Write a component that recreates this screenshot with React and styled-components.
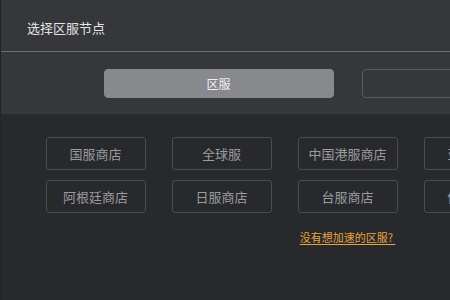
import React from "react";
import styled, { createGlobalStyle } from "styled-components";

const Global = createGlobalStyle`
  html, body {
    margin: 0;
    padding: 0;
    background: #28292d;
    overflow: hidden;
  }
  * { box-sizing: border-box; }
`;

const Dialog = styled.div`
  width: 694px;
  height: 300px;
  display: flex;
  flex-direction: column;
  font-family: "Noto Sans CJK SC", "Noto Sans", sans-serif;
  background: #28292d;
  border-left: 1px solid #232428;
`;

const Header = styled.div`
  height: 52px;
  flex: none;
  display: flex;
  align-items: center;
  padding-left: 26px;
  padding-top: 4px;
  background: #36373b;
  border-bottom: 1px solid #6f7074;
`;

const Title = styled.div`
  color: #e4e4e6;
  font-size: 13px;
  line-height: 1;
`;

const TabBar = styled.div`
  height: 63px;
  flex: none;
  display: flex;
  justify-content: center;
  align-items: center;
  gap: 28px;
  padding-top: 1px;
  background: #36373b;
  border-bottom: 1px solid #2c2d31;
`;

const Tab = styled.div`
  width: 230px;
  height: 29px;
  border-radius: 4px;
  display: flex;
  align-items: center;
  justify-content: center;
  font-size: 12px;
  color: #f2f2f2;
  background: ${(p) => (p.$active ? "#88898d" : "transparent")};
  border: 1px solid ${(p) => (p.$active ? "#88898d" : "#5a5b60")};
`;

const Content = styled.div`
  flex: 1;
  display: flex;
  flex-direction: column;
  align-items: center;
  padding-top: 22px;
  background: #28292d;
`;

const Grid = styled.div`
  display: grid;
  grid-template-columns: repeat(5, 100px);
  column-gap: 26px;
  row-gap: 10px;
`;

const Server = styled.div`
  height: 33px;
  border: 1px solid #4b4c51;
  border-radius: 3px;
  display: flex;
  align-items: center;
  justify-content: center;
  font-size: 13px;
  color: #9a9b9f;
`;

const Link = styled.a`
  margin-top: 16px;
  font-size: 11px;
  color: #e9a33a;
  text-decoration: underline;
  text-underline-offset: 2px;
  white-space: pre;
  cursor: pointer;
`;

const servers = [
  "国服商店",
  "全球服",
  "中国港服商店",
  "亚服商店",
  "美服商店",
  "阿根廷商店",
  "日服商店",
  "台服商店",
  "俄服商店",
  "土服商店",
];

export default function App() {
  return (
    <>
      <Global />
      <Dialog>
        <Header>
          <Title>选择区服节点</Title>
        </Header>
        <TabBar>
          <Tab $active>区服</Tab>
          <Tab>节点</Tab>
        </TabBar>
        <Content>
          <Grid>
            {servers.map((s) => (
              <Server key={s}>{s}</Server>
            ))}
          </Grid>
          <Link>没有想加速的区服? </Link>
        </Content>
      </Dialog>
    </>
  );
}
